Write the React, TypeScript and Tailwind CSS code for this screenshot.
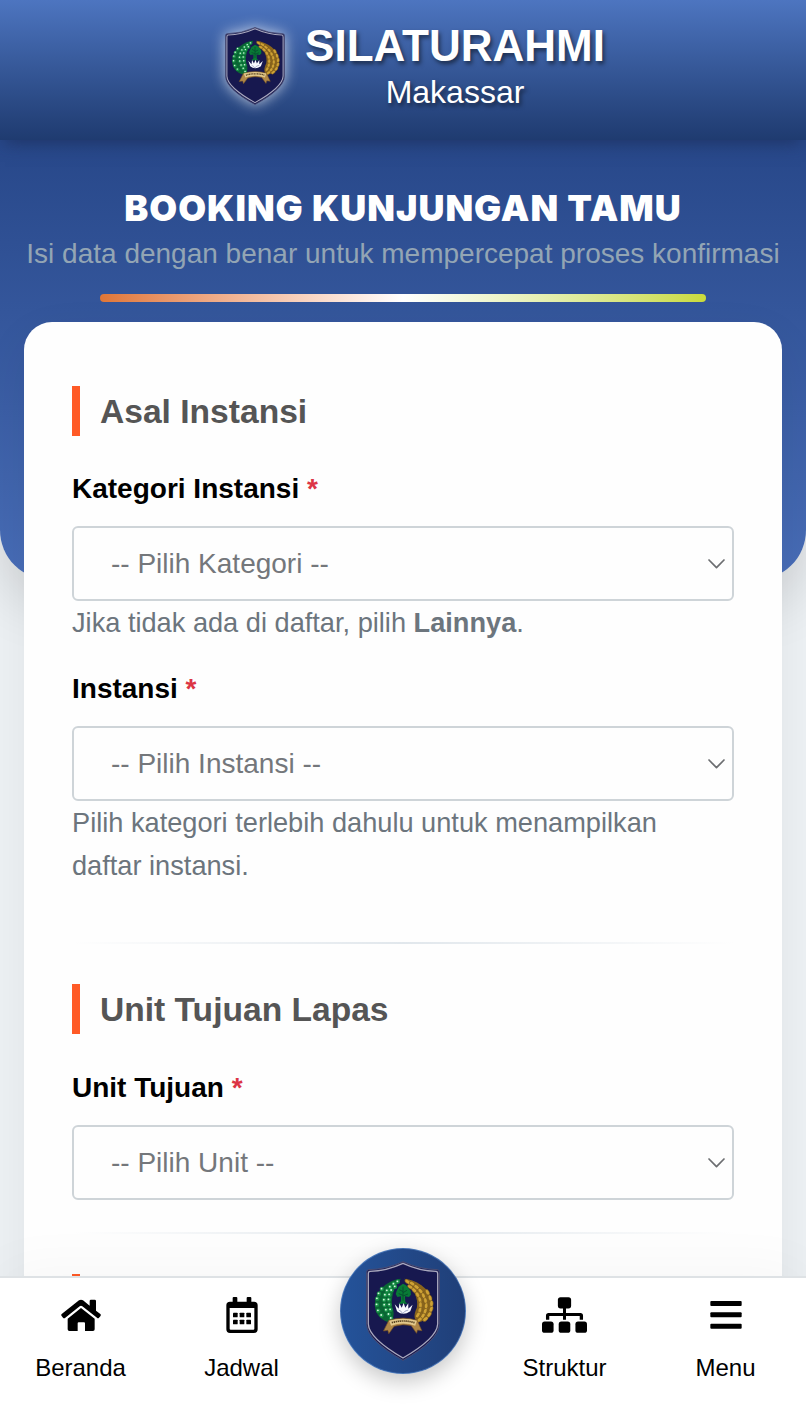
import React from "react";

const riceGrains = [
  [126, 62, 35], [140, 68, 35], [153, 78, 40], [165, 90, 50], [174, 104, 65], [180, 119, 80],
  [182, 135, 95], [179, 151, 110], [172, 165, 125], [162, 176, 140],
  [134, 78, 30], [146, 88, 45], [156, 101, 60], [163, 116, 75], [165, 132, 90], [163, 148, 105], [157, 162, 125],
  [186, 94, 60], [194, 111, 75], [198, 128, 92], [197, 145, 110], [191, 161, 125], [180, 174, 140],
];

const cotton = [
  [96, 62], [84, 69], [73, 78], [64, 89], [58, 102], [55, 117], [56, 132], [61, 147], [69, 160], [76, 172],
  [88, 77], [77, 88], [71, 101], [69, 116], [71, 131], [74, 146],
  [48, 84], [39, 98], [34, 113], [33, 131], [37, 149], [47, 163],
];

function Emblem({ className }: { className?: string }) {
  return (
    <svg viewBox="0 0 224 300" className={className} preserveAspectRatio="none" aria-hidden="true">
      <path d="M112 2 Q62 25 8 26 Q2 26 2 34 L2 190 Q4 238 112 298 Q220 238 222 190 L222 34 Q222 26 216 26 Q162 25 112 2Z" fill="#17184f" stroke="#4a4c72" strokeWidth="3" />
      <path d="M112 7 Q62 30 12 31 Q7 31 7 38 L7 189 Q9 232 112 291 Q215 232 217 189 L217 38 Q217 31 212 31 Q162 30 112 7Z" fill="none" stroke="#a9a8bd" strokeWidth="4" />
      <path d="M106 53 C68 56 30 86 27 128 C25 156 43 178 72 184 C86 171 86 154 80 140 C74 111 84 80 106 53Z" fill="#0a6534" />
      {cotton.map(([x, y], i) => (
        <g key={i}>
          <circle cx={x} cy={y} r="6.5" fill="#199348" />
          <circle cx={x - 1} cy={y - 1} r="2.8" fill="#d9f4e1" />
        </g>
      ))}
      <path d="M116 53 C160 58 198 88 202 128 C204 156 186 180 158 183 C142 176 146 156 154 140 C160 112 144 84 116 53Z" fill="#8a651b" />
      {riceGrains.map(([x, y, angle], i) => (
        <ellipse key={i} cx={x} cy={y} rx="9.5" ry="5.5" fill="#cfa234" stroke="#66491a" strokeWidth="1.5" transform={`rotate(${angle} ${x} ${y})`} />
      ))}
      <path d="M112 68 L121 73 L128 80 L135 90 L136 101 L130 108 L118 106 L119 123 L126 128 L98 128 L106 121 L106 106 L95 108 L90 99 L93 89 L99 77Z" fill="#087a35" />
      <path d="M112 77 V119 M112 92 L101 86 M112 95 L124 88 M112 103 L99 98 M112 105 L127 99" fill="none" stroke="#064f30" strokeWidth="3" />
      <path d="M87 130 L99 143 L101 127 L108 140 L114 126 L119 140 L128 127 L128 143 L141 131 L134 151 Q112 166 94 151Z" fill="#f9f9ff" />
      <path d="M99 147 Q108 150 111 158 Q116 149 128 147" fill="none" stroke="#7780a8" strokeWidth="2" />
      <path d="M69 178 Q113 165 155 178 L169 209 L156 207 L153 217 L137 194 Q112 187 85 196 L69 218 L66 208 L53 210Z" fill="#b08848" stroke="#755125" strokeWidth="2" />
      <path d="M70 179 Q112 167 154 179 L149 194 Q112 181 76 194Z" fill="#e3c98c" />
      <path d="M78 185 Q112 175 147 185" fill="none" stroke="#55401f" strokeWidth="5" strokeDasharray="4 2" />
    </svg>
  );
}

function HomeIcon() {
  return (
    <svg viewBox="0 0 120 108" className="h-9 w-10" fill="currentColor">
      <path d="M3 50 L54 10 Q60 6 66 10 L86 26 V12 Q86 8 90 8 H101 Q105 8 105 12 V41 L118 51 Q121 54 118 58 L114 62 Q111 65 108 62 L64 28 Q60 25 56 28 L13 62 Q9 65 6 62 L2 57 Q-1 53 3 50Z" />
      <path d="M60 33 L101 65 V97 Q101 102 96 102 H72 V79 Q72 76 69 76 H53 Q50 76 50 79 V102 H25 Q20 102 20 97 V65Z" />
    </svg>
  );
}

function CalendarIcon() {
  return (
    <svg viewBox="0 0 96 108" className="h-9 w-8" fill="currentColor">
      <path fillRule="evenodd" d="M23 0 H31 Q34 0 34 3 V14 H62 V3 Q62 0 65 0 H73 Q76 0 76 3 V14 H84 Q95 14 95 25 V97 Q95 108 84 108 H12 Q1 108 1 97 V25 Q1 14 12 14 H20 V3 Q20 0 23 0Z M11 33 V95 Q11 98 14 98 H82 Q85 98 85 95 V33Z" />
      <rect x="21" y="47" width="14" height="14" rx="2" />
      <rect x="41" y="47" width="14" height="14" rx="2" />
      <rect x="61" y="47" width="14" height="14" rx="2" />
      <rect x="21" y="68" width="14" height="14" rx="2" />
      <rect x="41" y="68" width="14" height="14" rx="2" />
      <rect x="61" y="68" width="14" height="14" rx="2" />
    </svg>
  );
}

function SitemapIcon() {
  return (
    <svg viewBox="0 0 136 108" className="h-9 w-[45px]" fill="currentColor">
      <rect x="48" y="0" width="40" height="34" rx="8" />
      <path d="M63.500 30 H72.500 V48 H116 Q124 48 124 56 V68 H114 V57 H72.500 V68 H63.500 V57 H22 V68 H12 V56 Q12 48 20 48 H63.500Z" />
      <rect x="0" y="74" width="35" height="34" rx="8" />
      <rect x="50.500" y="74" width="35" height="34" rx="8" />
      <rect x="101" y="74" width="35" height="34" rx="8" />
    </svg>
  );
}

function MenuIcon() {
  return (
    <svg viewBox="0 0 96 108" className="h-9 w-8" fill="currentColor">
      <rect x="1" y="12" width="94" height="15" rx="3" />
      <rect x="1" y="46" width="94" height="15" rx="3" />
      <rect x="1" y="80" width="94" height="15" rx="3" />
    </svg>
  );
}

function SectionTitle({ children }: { children?: React.ReactNode }) {
  return (
    <h2 className="flex h-[50px] items-center border-l-8 border-[#ff5a26] pt-px pl-5 text-[33.6px] leading-[50px] font-bold text-[#555555]">
      {children}
    </h2>
  );
}

function SelectField({ label, placeholder }: { label: string; placeholder: string }) {
  return (
    <div>
      <label className="block h-[42px] text-[28px] leading-[42px] font-bold text-black">
        {label} <span className="text-[#dc3545]">*</span>
      </label>
      <div className="mt-4 flex h-[75px] items-center justify-between rounded-[6px] border-2 border-[#ced4d8] pr-[7px] pl-[37px] text-[28px] text-[#74777b]">
        <span>{placeholder}</span>
        <svg viewBox="0 0 17 10" className="h-[10px] w-[17px]" fill="none" stroke="#6c6e71" strokeWidth="1.7" strokeLinecap="round" strokeLinejoin="round">
          <path d="M1 1 8.5 8.7 16 1" />
        </svg>
      </div>
    </div>
  );
}

function Divider() {
  return <div className="h-[2px] bg-linear-to-r from-transparent via-[#e1e7ec] to-transparent" />;
}

function NavItem({ icon, label }: { icon: React.ReactNode; label: string }) {
  return (
    <a className="flex w-[161px] flex-col items-center pt-[19px] text-black">
      {icon}
      <span className="mt-[17px] text-[24px] leading-9">{label}</span>
    </a>
  );
}

export default function App() {
  return (
    <div className="flex h-[1406px] w-[806px] flex-col overflow-hidden bg-[#edf1f4] font-['Liberation_Sans',Arial,sans-serif]">
      <div className="h-[1276px] overflow-hidden">
        <div className="h-[580px] rounded-b-[50px] bg-linear-to-b from-[#28488a] from-25% to-[#486db7] shadow-[0_20px_60px_rgba(0,0,0,0.14)]">
          <header className="flex h-[140px] justify-center bg-linear-to-b from-[#4d75c0] to-[#1f3b70] pl-[26px] shadow-[0_8px_16px_-5px_rgba(25,40,80,0.6)]">
            <Emblem className="mt-[27px] h-[78px] w-[60px] drop-shadow-[0_0_7px_rgba(255,255,255,0.7)]" />
            <div className="ml-[18px] flex w-[304px] flex-col items-center pt-[21px] text-white [text-shadow:2px_3px_4px_rgba(0,0,0,0.5)]">
              <h1 className="text-[44px] leading-[50px] font-bold">SILATURAHMI</h1>
              <p className="text-[32px] leading-[42px]">Makassar</p>
            </div>
          </header>
          <div className="flex flex-col items-center pt-[46px]">
            <h2 className="font-[Inter] text-[36px] leading-[44px] font-black tracking-[1px] whitespace-nowrap text-white">BOOKING KUNJUNGAN TAMU</h2>
            <p className="mt-[3px] text-[28px] leading-[42px] whitespace-nowrap text-[#93a5b4]">
              Isi data dengan benar untuk mempercepat proses konfirmasi
            </p>
            <div className="mt-[19px] h-2 w-[606px] rounded-full bg-linear-to-r from-[#df7636] via-white to-[#cadb39]" />
          </div>
        </div>
        <main className="mx-6 -mt-[258px] h-[1100px] rounded-t-[28px] bg-[#fefefe] px-12 pt-16 shadow-[0_16px_50px_rgba(0,0,0,0.06)]">
          <SectionTitle>Asal Instansi</SectionTitle>
          <div className="mt-[32px]">
            <SelectField label="Kategori Instansi" placeholder="-- Pilih Kategori --" />
          </div>
          <p className="text-[27.2px] leading-[43px] text-[#6c757d]">
            Jika tidak ada di daftar, pilih <b>Lainnya</b>.
          </p>
          <div className="mt-[24px]">
            <SelectField label="Instansi" placeholder="-- Pilih Instansi --" />
          </div>
          <p className="pr-8 text-[27.2px] leading-[43px] text-[#6c757d]">
            Pilih kategori terlebih dahulu untuk menampilkan daftar instansi.
          </p>
          <div className="mt-[55px] mb-[40px]">
            <Divider />
          </div>
          <SectionTitle>Unit Tujuan Lapas</SectionTitle>
          <div className="mt-[33px] mb-[32px]">
            <SelectField label="Unit Tujuan" placeholder="-- Pilih Unit --" />
          </div>
          <Divider />
          <div className="mt-[40px]">
            <SectionTitle />
          </div>
        </main>
      </div>
      <nav className="relative flex h-[130px] border-t-2 border-[#dee2e5] bg-white shadow-[0_-6px_60px_rgba(0,0,0,0.035)]">
        <NavItem icon={<HomeIcon />} label="Beranda" />
        <NavItem icon={<CalendarIcon />} label="Jadwal" />
        <div className="w-[162px]">
          <div className="absolute -top-[30px] left-[340px] flex size-[126px] items-center justify-center rounded-full border border-[#5f8fd0]/60 bg-linear-to-r from-[#24539a] to-[#203f78] shadow-[0_8px_22px_rgba(0,0,0,0.22)]">
            <Emblem className="h-[100px] w-[74px]" />
          </div>
        </div>
        <NavItem icon={<SitemapIcon />} label="Struktur" />
        <NavItem icon={<MenuIcon />} label="Menu" />
      </nav>
    </div>
  );
}
